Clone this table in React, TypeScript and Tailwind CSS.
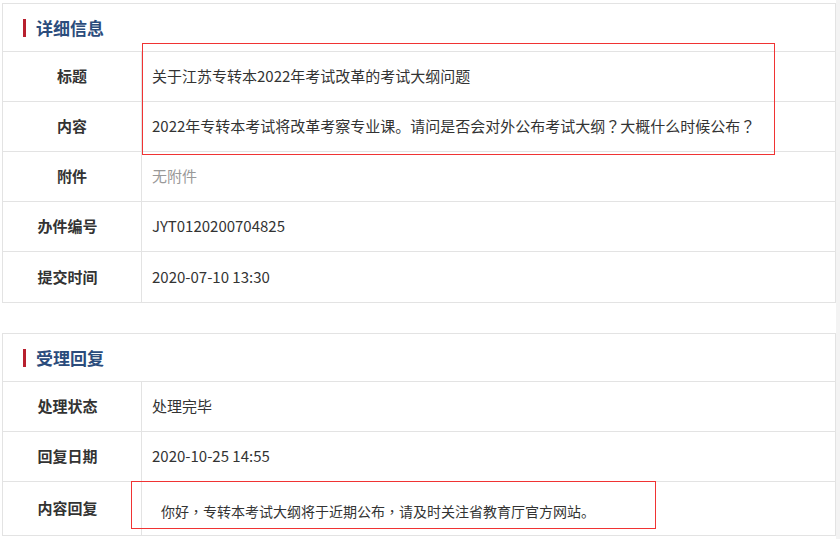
import React from "react"

type Row = {
  label: string
  value: string
  muted?: boolean
  wide?: boolean
  tall?: boolean
  indent?: boolean
}

const detailRows: Row[] = [
  { label: "标题", value: "关于江苏专转本2022年考试改革的考试大纲问题" },
  {
    label: "内容",
    value: "2022年专转本考试将改革考察专业课。请问是否会对外公布考试大纲？大概什么时候公布？",
  },
  { label: "附件", value: "无附件", muted: true },
  { label: "办件编号", value: "JYT0120200704825", wide: true },
  { label: "提交时间", value: "2020-07-10 13:30", wide: true },
]

const replyRows: Row[] = [
  { label: "处理状态", value: "处理完毕", wide: true },
  { label: "回复日期", value: "2020-10-25 14:55", wide: true },
  {
    label: "内容回复",
    value: "你好，专转本考试大纲将于近期公布，请及时关注省教育厅官方网站。",
    wide: true,
    tall: true,
    indent: true,
  },
]

// full-width ，？ sit in the middle of the em box in the reference
function Text({ value }: { value: string }) {
  const parts = value.split(/([，？])/)
  return (
    <>
      {parts.map((p, i) =>
        p === "，" || p === "？" ? (
          <span key={i} style={{ fontFamily: '"Noto Sans CJK TC", sans-serif' }}>
            {p}
          </span>
        ) : (
          p
        )
      )}
    </>
  )
}

function Section({ title, rows, className = "" }: { title: string; rows: Row[]; className?: string }) {
  return (
    <div className={`w-[834px] border border-[#e3e3e3] bg-white ${className}`}>
      <div className="flex items-center h-[48px] pl-[20px] border-b border-[#e3e3e3]">
        <span className="w-[3px] h-[18px] bg-[#b8202f]" />
        <span className="ml-[10px] text-[17px] font-bold text-[#2b4c7c] leading-none">{title}</span>
      </div>
      {rows.map((row, i) => (
        <div
          key={row.label}
          className={`flex ${row.tall ? "h-[53px]" : "h-[50px]"} ${
            i < rows.length - 1 ? "border-b border-[#e3e3e3]" : ""
          }`}
        >
          <div
            className={`w-[139px] shrink-0 flex items-center justify-center border-r border-[#e3e3e3] text-[15px] font-bold text-[#333] ${
              row.wide ? "pr-[9px]" : ""
            }`}
          >
            {row.label}
          </div>
          <div
            className={`flex items-center ${row.muted ? "text-[#999]" : "text-[#333]"} ${
              row.indent ? "pl-[19px] pt-[6px] text-[14px]" : "pl-[10px] text-[15px]"
            }`}
          >
            <span>
              <Text value={row.value} />
            </span>
          </div>
        </div>
      ))}
    </div>
  )
}

export default function App() {
  return (
    <div
      className="relative flex h-[539px] overflow-hidden bg-white"
      style={{ fontFamily: '"Noto Sans CJK SC", "Noto Sans", sans-serif' }}
    >
      <div className="w-[836px] shrink-0 pt-[3px] pl-[2px]">
        <Section title="详细信息" rows={detailRows} />
        <Section title="受理回复" rows={replyRows} className="mt-[30px]" />
      </div>
      <div className="flex-1 bg-[#f3f3f3]" />

      <div className="absolute left-[142px] top-[43px] w-[633px] h-[112px] border border-[#f03333]" />
      <div className="absolute left-[131px] top-[481px] w-[525px] h-[48px] border border-[#f03333]" />
    </div>
  )
}
